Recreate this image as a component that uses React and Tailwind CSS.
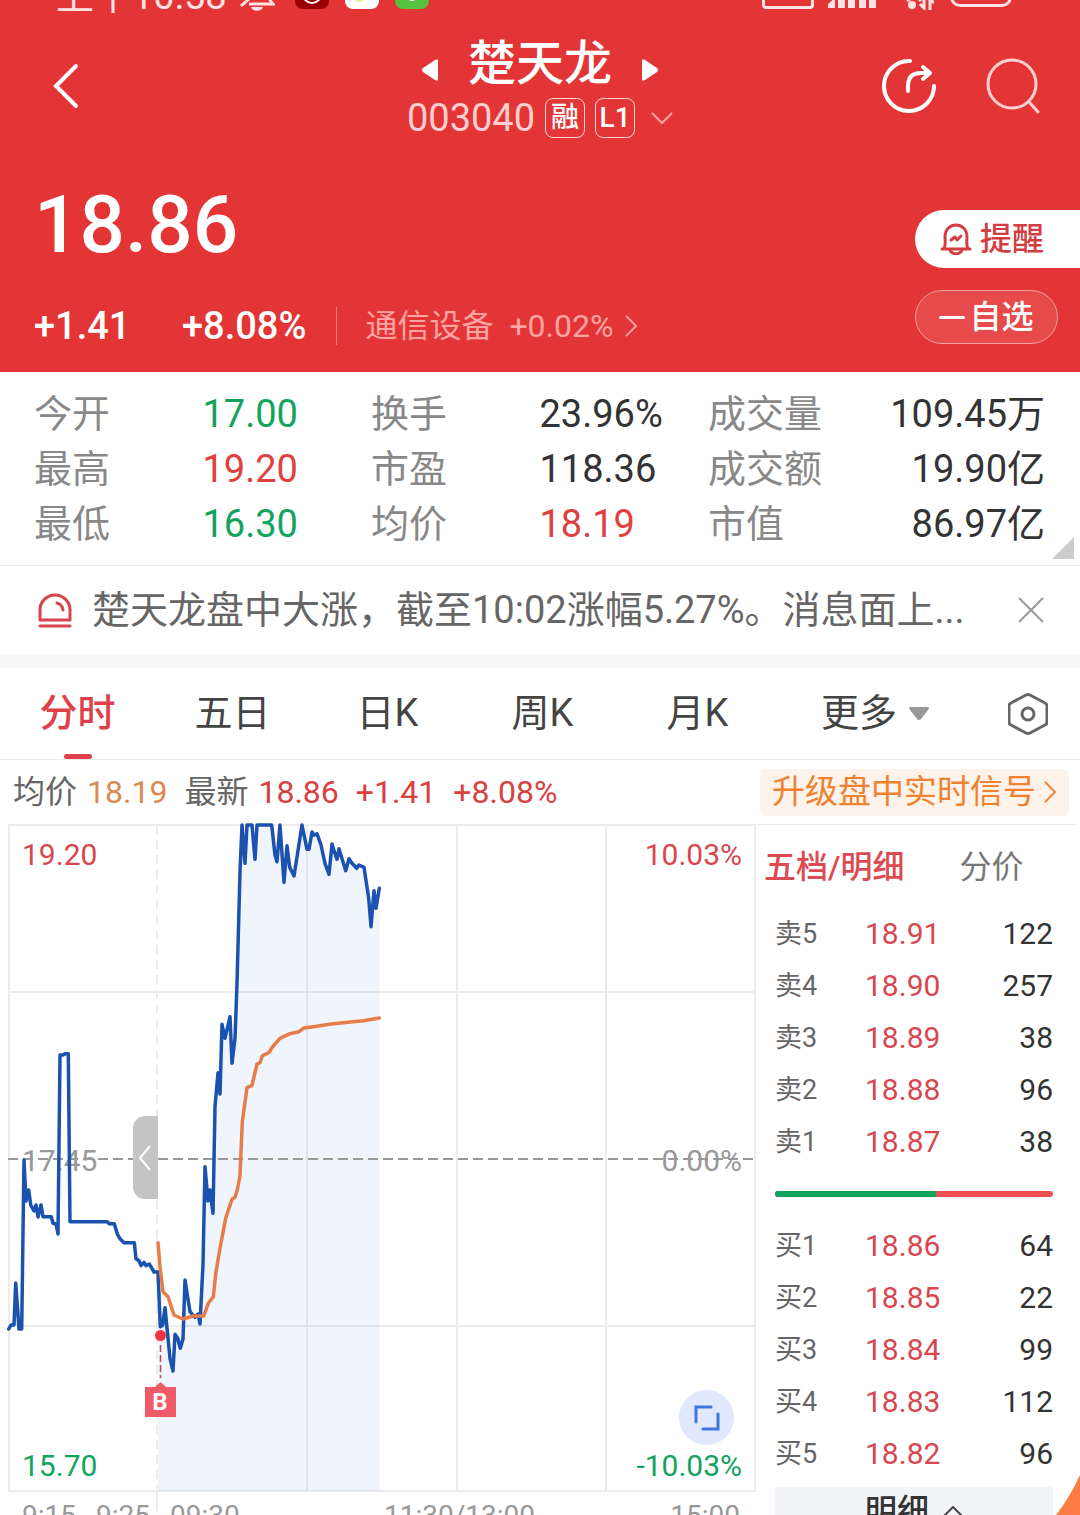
import React, { useState } from 'react';
import clsx from 'clsx';

const STATS = [
    [
        { label: '今开', value: '17.00', tone: 'down' },
        { label: '最高', value: '19.20', tone: 'up' },
        { label: '最低', value: '16.30', tone: 'down' },
    ],
    [
        { label: '换手', value: '23.96%' },
        { label: '市盈', value: '118.36' },
        { label: '均价', value: '18.19', tone: 'up' },
    ],
    [
        { label: '成交量', value: '109.45万' },
        { label: '成交额', value: '19.90亿' },
        { label: '市值', value: '86.97亿' },
    ],
];

const TABS = ['分时', '五日', '日K', '周K', '月K'];

const ASKS = [
    ['卖5', '18.91', 122],
    ['卖4', '18.90', 257],
    ['卖3', '18.89', 38],
    ['卖2', '18.88', 96],
    ['卖1', '18.87', 38],
];

const BIDS = [
    ['买1', '18.86', 64],
    ['买2', '18.85', 22],
    ['买3', '18.84', 99],
    ['买4', '18.83', 112],
    ['买5', '18.82', 96],
];

// call auction, 9:15 - 9:25
const AUCTION = '8.7,1329 11,1325 14,1325 15.7,1283 19,1329 21.7,1329 24,1160 26,1201 28.7,1190 30.7,1205 34,1211 36,1205 38,1217 41,1205 43,1216.7 51.3,1216.7 53,1223.3 56,1224 58,1234 60,1055 63,1055 65,1053.7 68.3,1053.7 70,1221.7 107.3,1221.7 109.3,1223.7 114.3,1223.7 117.3,1234 120,1238.7 124,1242.7 134.3,1242.7 136,1258.7 139,1260.7 141,1265.7 144,1262.3 146,1265.7 149.3,1264 154,1272 158,1272';

// continuous trading from 9:30
const PRICE = '158,1272 160.3,1326.7 162.7,1325 165,1307.7 170,1358.3 173,1371 175,1334.3 177.7,1338.3 180.3,1348.3 183,1339 185,1280 190,1311.7 195,1317.3 198,1314 200,1324 203,1264 205,1166.7 208,1201 210,1190 213,1213.3 215,1106.7 218,1072.7 220,1094 222,1024.3 225,1038.3 230,1016.7 232,1063.3 235,1038.3 237,983.3 240,871.7 242,825 245,863.3 247,825 252,825 255,859.3 257,825 271.7,825 275,855 277,861.7 280,825 284,882.3 287,845.7 289.7,867.3 294,876 302,825 307,849.3 309,849.3 312,832 314,835.3 317,833.7 321,845 325,863.3 329,874.3 332,844 334,850.7 337,859.3 339,848.7 345.7,870.7 349,858.7 352,863.3 356.7,868.3 359,865 364,867.3 368.7,898.3 371,926.7 374,890.7 376,908.3 379.3,888.3';

const AVERAGE = '158,1242.7 160,1266.7 163,1291.7 168,1296.7 174,1315 182.7,1319 193.3,1316 203.7,1316 208.3,1303.3 213.3,1296.7 216,1271.7 220,1248.3 225.7,1218.3 232,1199.3 235,1197.3 237.3,1190 240,1175.7 242.3,1121.7 247,1087.7 252,1085.3 257,1064 260,1062.7 262.3,1055.7 269.3,1052.3 272,1047.3 280,1038.3 290,1033.7 299,1031.7 303.7,1028 313.3,1026.7 333,1023.7 363.3,1020.7 379.3,1018';

const ChevronRight = ({ className }) => (
    <svg viewBox="0 0 14 24" fill="none" stroke="currentColor" strokeWidth="2" className={className}>
        <path d="M1 1l11 11L1 23" />
    </svg>
);

const StatusBar = () => (
    <div className="flex h-[14px] items-end justify-between overflow-hidden pr-[68px] pl-[56px] text-[#ffe3e3]">
        <div className="flex items-end">
            <span className="text-[38px] leading-9">上午10:58</span>
            <svg viewBox="0 0 36 34" className="mb-[2px] ml-3 h-[34px] w-9" fill="none" stroke="currentColor" strokeWidth="3">
                <path d="M2 28L31 2M10 26h24c-4-4-5-8-5-14" />
                <path d="M12 29h12c-1 5-11 5-12 0z" fill="currentColor" stroke="none" />
            </svg>
            <svg viewBox="0 0 34 34" className="mb-[5px] ml-5 h-[34px] w-[34px]">
                <rect width="34" height="34" rx="8" fill="#9c0005" />
                <circle cx="17" cy="19" r="9" fill="none" stroke="#fff" strokeWidth="2" />
            </svg>
            <svg viewBox="0 0 34 34" className="mb-[5px] ml-4 h-[34px] w-[34px]">
                <rect width="34" height="34" rx="8" fill="#fff" />
                <circle cx="14" cy="21" r="6" fill="#eef08a" />
            </svg>
            <svg viewBox="0 0 34 34" className="mb-[5px] ml-4 h-[34px] w-[34px]">
                <rect width="34" height="34" rx="8" fill="#57c140" />
                <circle cx="17" cy="22" r="4" fill="#fff" />
            </svg>
        </div>
        <div className="flex items-end">
            <span className="mb-[5px] h-8 w-[52px] rounded-[4px] border-[3px] border-current" />
            <svg viewBox="0 0 48 34" className="mb-[6px] ml-[14px] h-[34px] w-12" fill="currentColor">
                <path d="M0 34v-4l7-6v10zM10 22h7v12h-7zM20 16h7v18h-7zM31 8h7v26h-7zM41 0h7v34h-7z" />
            </svg>
            <svg viewBox="0 0 32 34" className="mb-1 ml-[26px] h-[34px] w-8" fill="none" stroke="currentColor" strokeWidth="3">
                <path d="M0 18q13-12 26 0M5 25q8-7 14 0" />
                <circle cx="10" cy="29" r="4" fill="currentColor" stroke="none" />
                <path d="M22 22v10l-4-4M28 34V23l4 4" />
            </svg>
            <span className="mb-[7px] ml-4 flex h-9 w-[62px] items-end justify-center rounded-[10px] border-[3px] border-current text-[24px] leading-6">
                78
            </span>
        </div>
    </div>
);

const TitleBar = () => (
    <div className="grid grid-cols-[1fr_auto_1fr] items-center px-10 pt-5">
        <button type="button" aria-label="返回" className="ml-3 h-12 w-7">
            <svg viewBox="0 0 28 48" className="h-12 w-7" fill="none" stroke="#fff" strokeWidth="4" strokeLinecap="round">
                <path d="M24 4L4 24l20 20" />
            </svg>
        </button>
        <div className="flex flex-col items-center">
            <div className="flex items-center gap-[30px]">
                <button type="button" aria-label="上一只">
                    <svg viewBox="0 0 16 22" className="mt-3 h-[22px] w-4" fill="#fff">
                        <path d="M16 2v18q0 3-3 1L1 13q-2-2 0-4L13 1q3-2 3 1z" />
                    </svg>
                </button>
                <h1 className="text-[48px] leading-[60px] font-medium text-white">楚天龙</h1>
                <button type="button" aria-label="下一只">
                    <svg viewBox="0 0 16 22" className="mt-3 h-[22px] w-4" fill="#fff">
                        <path d="M0 2v18q0 3 3 1l12-8q2-2 0-4L3 1Q0-1 0 2z" />
                    </svg>
                </button>
            </div>
            <div className="mt-1 flex items-center">
                <span className="text-[38px] leading-10 text-[#ffcfcf]">003040</span>
                <span className="ml-[10px] flex h-10 w-10 items-center justify-center rounded-[8px] border border-[#ffd5d5] text-[28px] leading-none font-medium text-white">融</span>
                <span className="ml-[10px] flex h-10 w-10 items-center justify-center rounded-[8px] border border-[#ffd5d5] text-[28px] leading-none font-medium text-white">L1</span>
                <svg viewBox="0 0 22 12" className="ml-4 h-3 w-[22px]" fill="none" stroke="#ffa5a5" strokeWidth="2">
                    <path d="M1 1l10 10L21 1" />
                </svg>
            </div>
        </div>
        <div className="flex justify-end gap-[50px]">
            <button type="button" aria-label="分享">
                <svg viewBox="0 0 54 56" className="h-14 w-[54px]" fill="none" stroke="#fff" strokeWidth="4" strokeLinecap="round" strokeLinejoin="round">
                    <path d="M28 3A25 25 0 1 0 52 28" />
                    <path d="M26 33v-5q0-13 13-13h8M41 9l7 6-7 6" />
                </svg>
            </button>
            <button type="button" aria-label="搜索">
                <svg viewBox="0 0 54 56" className="h-14 w-[54px]" fill="none" stroke="#ffd0d0" strokeWidth="3" strokeLinecap="round">
                    <circle cx="26" cy="26" r="24" />
                    <path d="M44 45l8 9" />
                </svg>
            </button>
        </div>
    </div>
);

const QuoteSummary = () => (
    <div className="flex justify-between pb-[26px] text-white">
        <div className="pt-[47px] pl-[34px]">
            <div className="text-[80px] leading-[80px] font-medium">18.86</div>
            <div className="mt-[41px] flex h-10 items-center text-[38px] leading-10 font-medium">
                <span className="w-[148px]">+1.41</span>
                <span>+8.08%</span>
                <span className="ml-[30px] h-[38px] w-px bg-[#f08080]" />
                <a href="#sector" className="ml-[28px] flex items-center text-[32px] font-normal text-[#ffa3a3]">
                    通信设备
                    <span className="ml-4">+0.02%</span>
                    <ChevronRight className="ml-3 h-[22px] w-[13px]" />
                </a>
            </div>
        </div>
        <div className="flex w-[165px] flex-col gap-[22px] pt-[72px]">
            <button type="button" className="flex h-[58px] items-center rounded-l-full bg-white pl-[25px] text-[32px] font-medium text-[#d33c40]">
                <svg viewBox="0 0 32 32" className="mr-2 h-8 w-8" fill="none" stroke="currentColor" strokeWidth="3" strokeLinecap="round" strokeLinejoin="round">
                    <path d="M2 26h28M4 25c2-3 1-7 1-11 0-16 22-16 22 0 0 4-1 8 1 11" />
                    <path d="M10 27c2 5 10 5 12 0" />
                    <path d="M11 17l4-3 2 3 4-4" />
                </svg>
                提醒
            </button>
            <button type="button" className="flex h-[54px] w-[143px] items-center justify-center rounded-full border border-[#f4a0a0] bg-[#e64a4b] text-[32px] font-medium">
                <span className="mr-1 h-[3px] w-[26px] rounded-full bg-white" />
                自选
            </button>
        </div>
    </div>
);

const StatsGrid = () => (
    <section className="relative grid grid-cols-3 border-b border-[#e9e9e9] pt-[15px] pr-[35px] pb-[13px] pl-[34px] text-[38px] leading-[55px]">
        {STATS.map((column, i) => (
            <dl key={i}>
                {column.map(({ label, value, tone }) => (
                    <div key={label} className={clsx('flex', i === 2 && 'justify-between')}>
                        <dt className={clsx('text-[#888]', i < 2 && 'w-1/2')}>{label}</dt>
                        <dd
                            className={clsx(
                                tone === 'up' && 'text-[#e0403f]',
                                tone === 'down' && 'text-[#12a35d]',
                                !tone && 'text-[#333]'
                            )}
                        >
                            {value}
                        </dd>
                    </div>
                ))}
            </dl>
        ))}
        <svg viewBox="0 0 22 22" className="absolute right-[6px] bottom-[6px] h-[22px] w-[22px]" fill="#ccc">
            <path d="M22 0v22H0z" />
        </svg>
    </section>
);

const NewsBar = () => (
    <section className="flex h-[88px] items-center pr-9 pl-[37px]">
        <svg viewBox="0 0 36 36" className="h-9 w-9 shrink-0" fill="none" stroke="#d9434c" strokeWidth="3" strokeLinecap="round">
            <path d="M3 28V18a15 15 0 0 1 30 0v10zM3 34h30" strokeLinejoin="round" />
            <path d="M20 11q5 1 6 7" />
        </svg>
        <p className="ml-[19px] flex-1 truncate text-[38px] leading-[56px] text-[#666]">
            楚天龙盘中大涨，截至10:02涨幅5.27%。消息面上...
        </p>
        <button type="button" aria-label="关闭">
            <svg viewBox="0 0 26 26" className="h-[26px] w-[26px]" fill="none" stroke="#999" strokeWidth="2">
                <path d="M1 1l24 24M25 1L1 25" />
            </svg>
        </button>
    </section>
);

const PeriodTabs = ({ active, onChange }) => (
    <nav className="grid h-[92px] grid-cols-[repeat(5,155fr)_200fr_105fr] border-b border-[#e9e9e9] text-[38px] text-[#444]">
        {TABS.map(tab => (
            <button
                key={tab}
                type="button"
                onClick={() => onChange(tab)}
                className={clsx('relative', active === tab && 'font-medium text-[#e0404a]')}
            >
                {tab}
                {active === tab && (
                    <span className="absolute bottom-0 left-1/2 h-[5px] w-7 -translate-x-1/2 rounded-full bg-[#e0404a]" />
                )}
            </button>
        ))}
        <button type="button" className="flex items-center justify-center gap-3">
            更多
            <svg viewBox="0 0 20 13" className="h-[13px] w-5" fill="#999">
                <path d="M1 0h18q2 1 0 3l-7 9q-2 2-4 0L1 3q-2-2 0-3z" />
            </svg>
        </button>
        <button type="button" aria-label="设置" className="flex items-center justify-center">
            <svg viewBox="0 0 40 44" className="h-11 w-10" fill="none" stroke="#666" strokeWidth="3" strokeLinejoin="round">
                <path d="M18 3q2-1 4 0l15 8q2 1 2 3v16q0 2-2 3l-15 8q-2 1-4 0L3 33q-2-1-2-3V14q0-2 2-3z" />
                <circle cx="20" cy="22" r="6" />
            </svg>
        </button>
    </nav>
);

const QuoteLine = () => (
    <div className="flex h-16 items-center justify-between pr-[11px] pl-[13px] text-[32px] whitespace-nowrap text-[#666]">
        <div className="flex">
            均价
            <span className="ml-[10px] text-[#dd8850]">18.19</span>
            <span className="ml-[17px]">最新</span>
            <span className="ml-[10px] text-[#d9403f]">18.86</span>
            <span className="ml-[17px] text-[#d9403f]">+1.41</span>
            <span className="ml-[17px] text-[#d9403f]">+8.08%</span>
        </div>
        <a href="#signal" className="flex h-[47px] items-center rounded-[6px] bg-[#fef3eb] px-3 text-[33px] text-[#ee8230]">
            升级盘中实时信号
            <ChevronRight className="ml-2 h-[22px] w-[13px]" />
        </a>
    </div>
);

const TrendChart = () => (
    <div className="pl-2">
        <div className="relative text-[30px] leading-10">
            <div className="absolute inset-0 flex flex-col justify-between pt-[11px] pr-[14px] pb-[6px] pl-[14px]">
                <div className="flex justify-between text-[#d9474e]">
                    <span>19.20</span>
                    <span>10.03%</span>
                </div>
                <div className="flex justify-between text-[#999]">
                    <span>17.45</span>
                    <span>0.00%</span>
                </div>
                <div className="flex justify-between text-[#12a35d]">
                    <span>15.70</span>
                    <span>-10.03%</span>
                </div>
            </div>
            <svg viewBox="8 824 748 668" className="relative block w-full overflow-visible" fill="none">
                <g stroke="#ececec" strokeWidth="2">
                    <path d="M9 825h746v666H9zM9 992h746M9 1326h746M307 825v666M457 825v666M606 825v666" />
                    <path d="M157 825v666" strokeDasharray="9 6" />
                    <path d="M157 1491v20" />
                </g>
                <polygon points={`158,1491 ${PRICE} 379.3,1491`} fill="#3b78e7" fillOpacity="0.08" />
                <path d="M8 1159h748" stroke="#999" strokeWidth="2" strokeDasharray="10 5" />
                <g strokeWidth="3.5" strokeLinejoin="round" strokeLinecap="round">
                    <polyline points={AUCTION} stroke="#1b52b0" />
                    <polyline points={PRICE} stroke="#1b52b0" />
                    <polyline points={AVERAGE} stroke="#e67c48" />
                </g>
                <circle cx="160.5" cy="1335.5" r="5.5" fill="#f0343f" />
                <path d="M160.5 1345v33" stroke="#c04058" strokeWidth="1.5" strokeDasharray="7 3" />
                <path d="M145 1387h10l5.5-5 5.5 5h10v30h-31z" fill="#f05a66" />
                <text x="160" y="1410" textAnchor="middle" fontSize="24" fontWeight="700" fill="#fff">B</text>
            </svg>
            <button type="button" aria-label="收起集合竞价" className="absolute top-[292px] right-[80%] flex h-[83px] w-[25px] items-center justify-center rounded-l-[12px] bg-[#c4c4c4]">
                <svg viewBox="0 0 14 26" className="h-[26px] w-[14px]" fill="none" stroke="#fff" strokeWidth="2">
                    <path d="M12 1L2 13l10 12" />
                </svg>
            </button>
            <button type="button" aria-label="全屏" className="absolute right-[22px] bottom-[47px] flex h-[55px] w-[55px] items-center justify-center rounded-full bg-[#dfe8fc]">
                <svg viewBox="0 0 26 26" className="h-[26px] w-[26px]" fill="none" stroke="#3f78dc" strokeWidth="3" strokeLinecap="round">
                    <path d="M2 17V2h15M24 9v15H9" />
                </svg>
            </button>
        </div>
        <div className="grid grid-cols-[376fr_372fr] text-[28px] leading-[48px] text-[#999]">
            <div className="flex gap-5 pl-[14px]">
                <span>9:15</span>
                <span>9:25</span>
                <span>09:30</span>
            </div>
            <div className="flex justify-between pr-4">
                <span>11:30/13:00</span>
                <span>15:00</span>
            </div>
        </div>
    </div>
);

const OrderTable = ({ rows }) => (
    <table className="w-full">
        <tbody>
            {rows.map(([level, price, volume]) => (
                <tr key={level} className="h-[52px] text-[30px] leading-10">
                    <th scope="row" className="w-[90px] text-left text-[27px] font-normal text-[#666]">{level}</th>
                    <td className="text-[#d9474e]">{price}</td>
                    <td className="text-right text-[#333]">{volume}</td>
                </tr>
            ))}
        </tbody>
    </table>
);

const OrderBook = () => (
    <aside>
        <div className="mr-[5px] flex h-[84px] items-center gap-[55px] border-t border-[#e9e9e9] pl-2 text-[32px]">
            <button type="button" className="font-medium text-[#dd4a52]">五档/明细</button>
            <button type="button" className="text-[#777]">分价</button>
        </div>
        <div className="pr-[27px] pl-[19px]">
            <OrderTable rows={ASKS} />
            <div className="flex h-[52px] items-center">
                <div className="flex h-[6px] w-full overflow-hidden rounded-full bg-[#ef4f52]">
                    <span className="w-[58%] bg-[#12a35d]" />
                </div>
            </div>
            <OrderTable rows={BIDS} />
            <button type="button" className="mt-[7px] flex h-12 w-full items-center justify-center gap-[14px] bg-[#f3f4f8] text-[32px] font-medium text-[#333]">
                明细
                <svg viewBox="0 0 20 11" className="h-[11px] w-5" fill="none" stroke="#444" strokeWidth="2">
                    <path d="M1 10l9-9 9 9" />
                </svg>
            </button>
        </div>
    </aside>
);

const App = () => {
    const [tab, setTab] = useState('分时');

    return (
        <div className="relative h-screen overflow-hidden bg-white font-[Roboto,'Noto_Sans_CJK_SC',sans-serif]">
            <header className="bg-[#e33536]">
                <StatusBar />
                <TitleBar />
                <QuoteSummary />
            </header>
            <StatsGrid />
            <NewsBar />
            <div className="h-[14px] bg-[#f7f7f7]" />
            <PeriodTabs active={tab} onChange={setTab} />
            <QuoteLine />
            <main className="grid grid-cols-[756fr_324fr]">
                <TrendChart />
                <OrderBook />
            </main>
            <svg viewBox="0 0 24 40" className="absolute right-0 bottom-0 h-10 w-6" fill="#ff7b45">
                <path d="M24 0v40H0Q14 22 24 0z" />
            </svg>
        </div>
    );
};

export default App;
